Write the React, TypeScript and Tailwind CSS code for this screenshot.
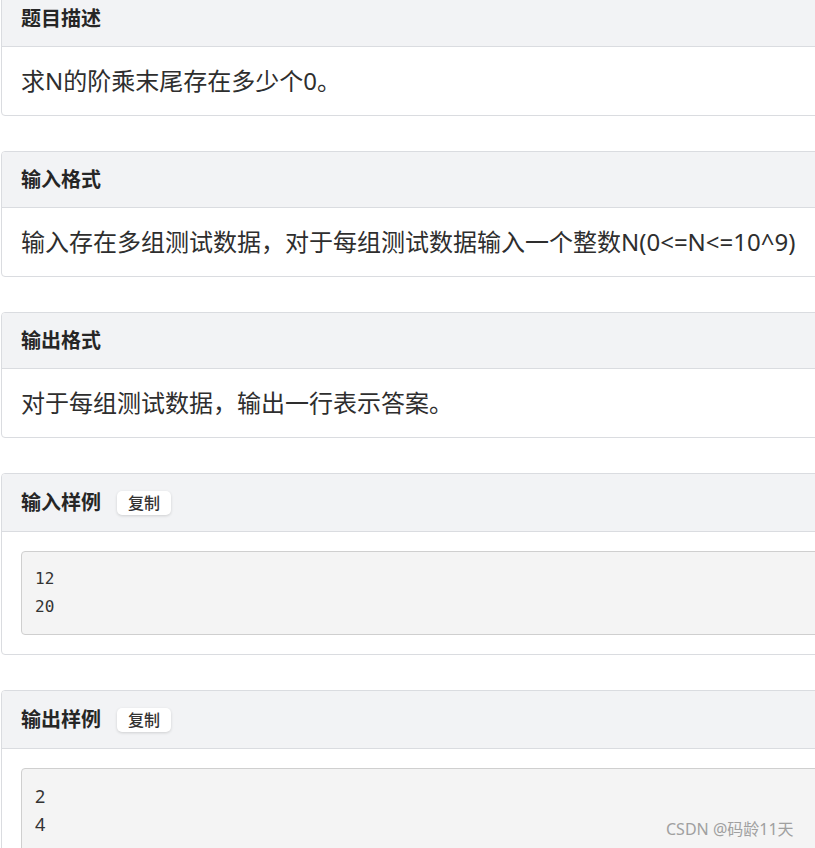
const sans = { fontFamily: '"Noto Sans", "Noto Sans CJK SC", sans-serif' };

interface CardProps {
  title: string;
  copy?: boolean;
  children: React.ReactNode;
}

const Card = ({ title, copy, children }: CardProps) => {
  return (
    <div className="w-[900px] mb-[35px] border border-[#dadce0] rounded-[4px] bg-white overflow-hidden">
      <div
        className={`flex items-center gap-4 bg-[#f2f3f5] border-b border-[#dadce0] px-[19px] ${
          copy ? "h-[58px]" : "h-[56px]"
        }`}
      >
        <h3 className="text-[20px] leading-[30px] font-bold text-[#262626]">{title}</h3>
        {copy && (
          <button className="h-[24px] px-[11px] rounded-[5px] bg-white text-[16px] leading-[24px] font-medium text-[#333] shadow-[0_1px_3px_rgba(0,0,0,0.15)]">
            复制
          </button>
        )}
      </div>
      {children}
    </div>
  );
};

const Text = ({ children }: { children: React.ReactNode }) => (
  <p className="px-[19px] py-[19px] text-[24px] leading-[30px] text-[#2e2e2e] whitespace-nowrap">
    {children}
  </p>
);

const Sample = ({ lines, mono }: { lines: string[]; mono?: boolean }) => (
  <div className="p-[19px]">
    <pre
      className="border border-[#cfcfcf] rounded-[4px] bg-[#f4f4f4] px-[13px] py-[13px] text-[16px] leading-[28px] text-[#333]"
      style={
        mono
          ? { fontFamily: '"DejaVu Sans Mono", "Liberation Mono", monospace' }
          : { fontFamily: '"Noto Sans", sans-serif', fontSize: "18px" }
      }
    >
      {lines.join("\n")}
    </pre>
  </div>
);

export default function App() {
  return (
    <div className="relative w-[815px] h-[848px] overflow-hidden bg-white" style={sans}>
      <div className="-mt-[10px] pl-[1px]">
        <Card title="题目描述">
          <Text>求N的阶乘末尾存在多少个0。</Text>
        </Card>
        <Card title="输入格式">
          <Text>输入存在多组测试数据，对于每组测试数据输入一个整数N(0&lt;=N&lt;=10^9)</Text>
        </Card>
        <Card title="输出格式">
          <Text>对于每组测试数据，输出一行表示答案。</Text>
        </Card>
        <Card title="输入样例" copy>
          <Sample lines={["12", "20"]} mono />
        </Card>
        <Card title="输出样例" copy>
          <Sample lines={["2", "4", ""]} />
        </Card>
      </div>
      <div className="absolute left-[666px] top-[818px] text-[16px] leading-[22px] text-[#a0a0a0]">
        CSDN @码龄11天
      </div>
    </div>
  );
}
